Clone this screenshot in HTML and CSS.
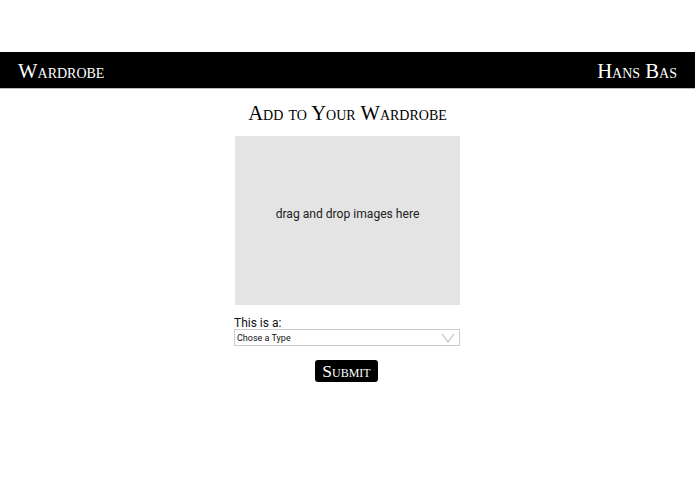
FILE: index.html
```html
<!DOCTYPE html>
<html>
<head>
<meta charset="utf-8">
<link rel="stylesheet" href="styles.css">
</head>
<body>
<header class="topbar">
  <span class="brand">Wardrobe</span>
  <span class="user">Hans Bas</span>
</header>
<main class="content">
  <h1 class="title">Add to Your Wardrobe</h1>
  <div class="dropzone">drag and drop images here</div>
  <div class="field">
    <label class="label">This is a:</label>
    <div class="select">
      <span>Chose a Type</span>
      <svg class="chev" width="14" height="10" viewBox="0 0 14 10"><path d="M1 1 L7 9 L13 1" fill="none" stroke="#aaa" stroke-width="1"/></svg>
    </div>
  </div>
  <button class="submit">Submit</button>
</main>
</body>
</html>
```
FILE: styles.css
```css
html, body { margin: 0; padding: 0; background: #fff; }
body { font-family: "Liberation Serif", serif; }
.topbar {
  margin-top: 52px;
  height: 36px;
  background: #000;
  border-bottom: 1px solid #bbb;
  display: flex;
  justify-content: space-between;
  align-items: center;
  padding: 0 18px;
  color: #fff;
  font-variant: small-caps;
  font-size: 20.7px;
}
.brand, .user { line-height: 1; padding-top: 2px; }
.content {
  display: flex;
  flex-direction: column;
  align-items: center;
}
.title {
  font-variant: small-caps;
  font-weight: normal;
  font-size: 20.6px;
  margin: 12px 0 0;
  line-height: 24px;
  color: #000;
}
.dropzone {
  margin-top: 11px;
  width: 225px;
  height: 155px;
  padding-bottom: 14px;
  background: #e4e4e4;
  display: flex;
  align-items: center;
  justify-content: center;
  font-family: Roboto, sans-serif;
  font-size: 12.1px;
  color: #222;
}
.field {
  margin-top: 12px;
  width: 226px;
  margin-right: 1px;
  display: flex;
  flex-direction: column;
}
.label {
  font-family: Roboto, sans-serif;
  font-size: 12px;
  line-height: 13px;
  color: #111;
}
.select {
  height: 15px;
  margin-top: -1px;
  border: 1px solid #ccc;
  display: flex;
  align-items: center;
  justify-content: space-between;
  padding: 0 4px 0 2px;
  font-family: Roboto, sans-serif;
  font-size: 9px;
  color: #111;
}
.chev { display: block; }
.submit {
  margin-top: 14px;
  width: 63px;
  height: 22px;
  margin-left: -2px;
  background: #000;
  color: #fff;
  border: none;
  border-radius: 3px;
  font-family: "Liberation Serif", serif;
  font-variant: small-caps;
  font-size: 17.5px;
  padding: 0;
  line-height: 22px;
}
```
